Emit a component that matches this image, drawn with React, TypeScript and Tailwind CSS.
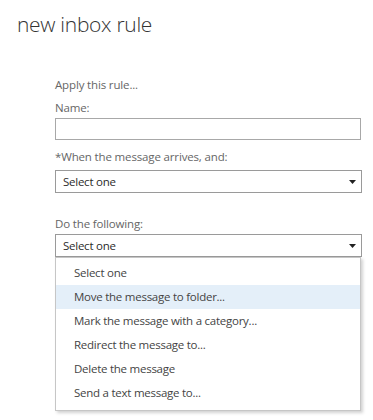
import { useState } from "react";

const font = { fontFamily: '"Open Sans", "Noto Sans", Arial, sans-serif' };

const options = [
  "Select one",
  "Move the message to folder...",
  "Mark the message with a category...",
  "Redirect the message to...",
  "Delete the message",
  "Send a text message to...",
];

// small filled caret used by the fake selects
const Caret = () => (
  <svg width="7" height="4" viewBox="0 0 7 4" className="shrink-0">
    <path d="M0 0h7L3.5 4z" fill="#222" />
  </svg>
);

const SelectBox = ({ open, hover }: { open?: boolean; hover?: number }) => (
  <div className="relative">
    <div className="flex h-[23px] items-center justify-between border border-[#9a9a9a] bg-white pl-[7px] pr-[5px] text-[11.5px] tracking-[-0.25px] text-[#2b2b2b]">
      <span>Select one</span>
      <Caret />
    </div>
    {open && (
      <div className="absolute left-0 top-full z-10 w-[306px] border border-[#c6c6c6] bg-white pt-[3px] pb-[5px] shadow-[2px_2px_3px_rgba(0,0,0,0.18)]">
        {options.map((o, i) => (
          <div
            key={o}
            className={`flex h-[24px] items-center pl-[18px] text-[11.5px] tracking-[-0.25px] text-[#444] ${
              i === hover ? "bg-[#e4eff9]" : ""
            }`}
          >
            {o}
          </div>
        ))}
      </div>
    )}
  </div>
);

export default function App() {
  const [name, setName] = useState("");

  return (
    <div className="h-[420px] w-[373px] bg-white" style={font}>
      <h1 className="pl-[17px] pt-[9px] text-[21px] font-light leading-[30px] tracking-[-0.3px] text-[#333]">
        new inbox rule
      </h1>

      <div className="ml-[55px] mt-[38px] w-[307px] text-[11.5px] tracking-[-0.15px] text-[#666]">
        <div className="leading-[16px]">Apply this rule...</div>
        <div className="mt-[7px] leading-[16px]">Name:</div>
        <input
          value={name}
          onChange={(e) => setName(e.target.value)}
          className="mt-[2px] block h-[22px] w-[306px] border border-[#a8a8a8] bg-white px-2 text-[11.5px] text-[#333] outline-none"
        />
        <div className="mt-[9px] leading-[16px]">*When the message arrives, and:</div>
        <div className="mt-[5px]">
          <SelectBox />
        </div>
        <div className="mt-[23px] leading-[16px]">Do the following:</div>
        <div className="mt-[2px]">
          <SelectBox open hover={1} />
        </div>
      </div>
    </div>
  );
}
